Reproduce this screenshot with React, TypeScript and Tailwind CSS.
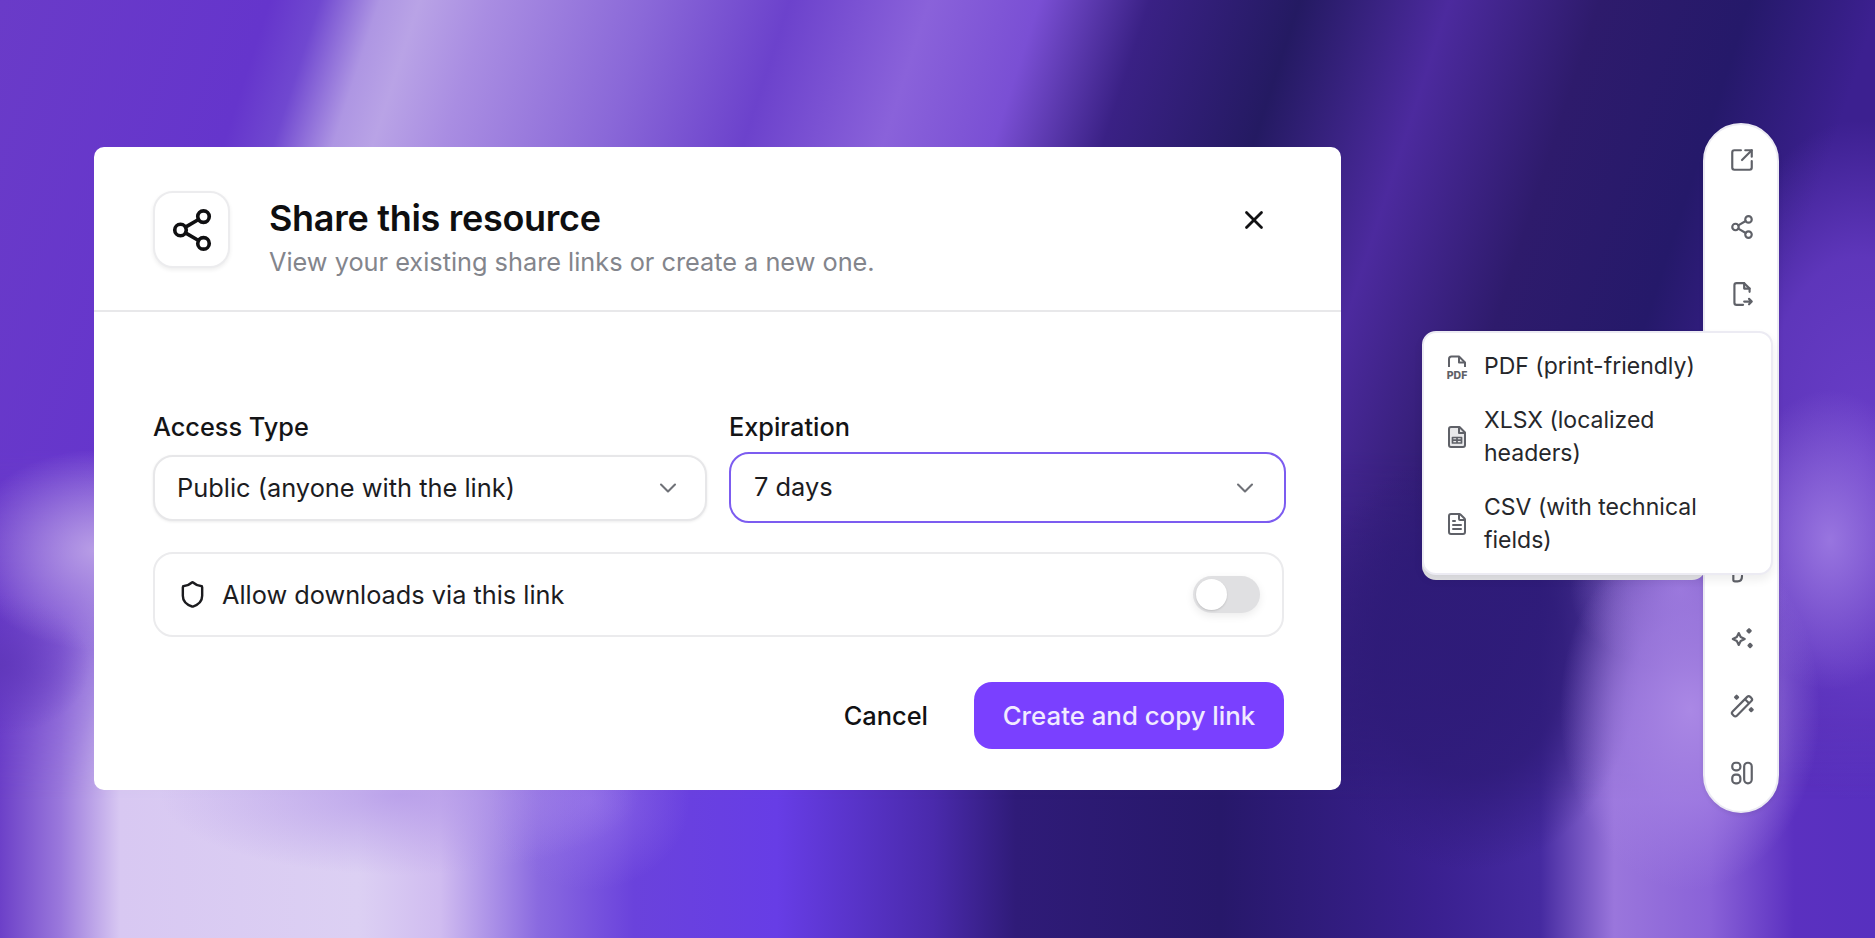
import React from 'react';
import { ChevronDown, FileText, Share2, Shield, SquareArrowOutUpRight, X } from 'lucide-react';

function FileExportIcon() {
  return (
    <svg width="26" height="26" viewBox="0 0 24 24" fill="none" stroke="currentColor" strokeWidth="2" strokeLinecap="round" strokeLinejoin="round">
      <path d="M19 10V7l-5-5H7a2 2 0 0 0-2 2v16a2 2 0 0 0 2 2h6" />
      <path d="M14 2v5h5" />
      <path d="M14 19h7M18.5 16.5 21 19l-2.5 2.5" />
    </svg>
  );
}

function StarsIcon() {
  return (
    <svg width="26" height="26" viewBox="0 0 24 24" fill="none" stroke="currentColor" strokeWidth="2" strokeLinejoin="round">
      <path d="M9 6.500l1.800 3.700 3.700 1.800-3.700 1.800L9 17.500l-1.800-3.700L3.500 12l3.700-1.800z" />
      <path d="M18.500 3l1.500 1.500L18.500 6 17 4.500zM19.500 16.500l1.500 1.500-1.500 1.500-1.500-1.500z" fill="currentColor" />
    </svg>
  );
}

function WandIcon() {
  return (
    <svg width="26" height="26" viewBox="0 0 24 24" fill="none" stroke="currentColor" strokeWidth="2" strokeLinejoin="round">
      <rect x="0.500" y="9.500" width="23" height="5.500" rx="2" transform="rotate(-45 12 12.250)" />
      <path d="M15 6l3.500 3.500" />
      <path d="M7 2.500l1.400 1.400L7 5.300 5.600 3.900zM20.500 14l1.400 1.400-1.400 1.400-1.400-1.400z" fill="currentColor" />
    </svg>
  );
}

function LayoutIcon() {
  return (
    <svg width="26" height="26" viewBox="0 0 24 24" fill="none" stroke="currentColor" strokeWidth="2">
      <rect x="3" y="2.500" width="7.500" height="7" rx="3" />
      <rect x="3" y="13.500" width="7.500" height="8" rx="3" />
      <rect x="14" y="2.500" width="7" height="19" rx="3.500" />
    </svg>
  );
}

function PdfIcon() {
  return (
    <svg width="24" height="26" viewBox="0 0 24 26" fill="none" stroke="currentColor" strokeWidth="2" strokeLinejoin="round">
      <path d="M4 13V5a2.500 2.500 0 0 1 2.500-2.500H14l6 6V13" />
      <path d="M14 2.500v6h6" />
      <text x="12" y="24.500" textAnchor="middle" fontSize="10.500" fontWeight="800" fill="currentColor" stroke="none" fontFamily="Inter, sans-serif">PDF</text>
    </svg>
  );
}

function SheetIcon() {
  return (
    <svg width="24" height="24" viewBox="0 0 24 24" fill="none" stroke="currentColor" strokeWidth="2" strokeLinejoin="round">
      <path d="M14.500 2H6a2 2 0 0 0-2 2v16a2 2 0 0 0 2 2h12a2 2 0 0 0 2-2V7.500z" fill="#e8e8ea" />
      <path d="M14 2v6h6" />
      <path d="M7.500 12.500h9v5.500h-9zM12 12.500V18M7.500 15.200h9" strokeWidth="1.700" />
    </svg>
  );
}

function HiddenToolIcon() {
  return (
    <svg width="26" height="26" viewBox="0 0 24 24" fill="none" stroke="currentColor" strokeWidth="2" strokeLinecap="round">
      <path d="M4 6v14a1.500 1.500 0 0 0 1.500 1.500H8c2.500 0 4-2 4-5" />
    </svg>
  );
}

function SelectBox({ value, focused }: { value: string; focused?: boolean }) {
  return (
    <div
      className={
        focused
          ? '-mt-[3px] flex h-[71px] items-center justify-between rounded-[20px] border-2 border-[#7c5cf0] bg-white pl-[23px] pr-[25px]'
          : 'flex h-[66px] items-center justify-between rounded-[20px] border-2 border-[#e7e7e9] bg-white pl-[22px] pr-[23px] shadow-[0_1px_3px_rgba(0,0,0,0.08)]'
      }
    >
      <span className="text-[25.400px] text-[#1c1c1f]">{value}</span>
      <ChevronDown size={28} strokeWidth={1.8} className="text-[#6f7177]" />
    </div>
  );
}

function Field({ label, children }: { label: string; children: React.ReactNode }) {
  return (
    <div className="flex flex-col">
      <label className="mb-[12px] text-[25.300px] font-medium leading-[32px] text-[#141416]">{label}</label>
      {children}
    </div>
  );
}

function MenuRow({ icon, children }: { icon: React.ReactNode; children: React.ReactNode }) {
  return (
    <div className="flex items-center gap-[15px]">
      <span className="flex w-[24px] shrink-0 justify-center text-[#5f6168]">{icon}</span>
      <span className="text-[23px] leading-[33.500px] text-[#26272b]">{children}</span>
    </div>
  );
}

export default function App() {
  return (
    <div className="relative h-[938px] w-[1875px] overflow-hidden bg-[linear-gradient(90deg,#6c40c8_0px,#9a78dc_60px,#d8c8f2_120px,#dcd0f3_358px,#d0bcf0_440px,#8a6ae0_538px,#6a42dc_634px,#673de6_777px,#4a2aac_933px,#2f1b78_1016px,#27186a_1220px,#3a2090_1435px,#452aa0_1540px,#9a76dc_1614px,#8a62d8_1710px,#5b30c0_1794px,#5730bf_1875px)] font-['Inter',sans-serif] before:absolute before:left-0 before:top-0 before:h-[938px] before:w-[2600px] before:origin-top before:-skew-x-[18deg] before:bg-[linear-gradient(90deg,#6a3bc8_0px,#6535cc_270px,#7048d0_320px,#ae96e3_380px,#b9a3e6_420px,#a98de2_490px,#8a68d8_650px,#6c42cc_790px,#8a62da_930px,#7a4fd4_1040px,#3a2185_1150px,#241a62_1300px,#4c2a9e_1450px,#2e1b6c_1600px,#25196a_1750px,#3c2090_1880px,#3c2090_2600px)] before:[mask-image:linear-gradient(to_bottom,black_450px,transparent_800px)]">
      <div className="relative flex h-full w-full items-start bg-[radial-gradient(ellipse_130px_180px_at_1690px_710px,#aa88e5_0%,rgba(165,130,228,0.7)_50%,transparent_100%),radial-gradient(ellipse_110px_80px_at_1680px_590px,rgba(160,125,225,0.8)_0%,transparent_100%),radial-gradient(ellipse_100px_150px_at_1830px_540px,rgba(155,120,225,0.95)_0%,transparent_100%),radial-gradient(ellipse_170px_340px_at_1860px_460px,rgba(108,63,204,0.95)_0%,rgba(108,63,204,0.7)_60%,transparent_100%),radial-gradient(ellipse_170px_210px_at_1470px_660px,rgba(46,27,120,0.95)_0%,rgba(46,27,120,0.8)_55%,transparent_100%),radial-gradient(ellipse_240px_80px_at_400px_795px,rgba(178,150,232,0.75)_0%,transparent_100%),radial-gradient(ellipse_100px_90px_at_590px_800px,rgba(150,115,235,0.7)_0%,transparent_100%),radial-gradient(ellipse_130px_100px_at_95px_550px,rgba(190,165,232,0.9)_0%,transparent_100%),radial-gradient(ellipse_90px_70px_at_0px_665px,rgba(95,55,185,0.85)_0%,transparent_100%)] pl-[94px] pt-[147px]">
        {/* dialog */}
        <div className="w-[1247px] shrink-0 rounded-[10px] bg-white">
          <header className="flex h-[165px] items-start border-b-2 border-[#e8e8ea] pl-[59px] pr-[72px] pt-[44px]">
            <div className="flex h-[77px] w-[77px] items-center justify-center rounded-[20px] border-2 border-[#ececee] bg-white shadow-[0_2px_4px_rgba(0,0,0,0.07)]">
              <Share2 size={46} strokeWidth={1.9} className="text-[#0f0f11]" />
            </div>
            <div className="ml-[39px] flex-1">
              <h1 className="mt-[4px] text-[36px] font-semibold leading-[46px] tracking-[-0.3px] text-[#0e0e10]">Share this resource</h1>
              <p className="mt-[5px] text-[25.300px] leading-[32px] text-[#83858c]">View your existing share links or create a new one.</p>
            </div>
            <X size={30} strokeWidth={2.2} className="mt-[14px] text-[#111113]" />
          </header>

          <div className="px-[59px] pb-[41px] pt-[99px]">
            <div className="grid grid-cols-[554px_557px] gap-x-[22px]">
              <Field label="Access Type">
                <SelectBox value="Public (anyone with the link)" />
              </Field>
              <Field label="Expiration">
                <SelectBox value="7 days" focused />
              </Field>
            </div>

            <div className="mt-[29px] flex h-[85px] w-[1131px] items-center rounded-[20px] border-2 border-[#ebebed] pl-[23px] pr-[22px]">
              <Shield size={29} strokeWidth={2} className="text-[#1b1b1e]" />
              <span className="ml-[15px] flex-1 text-[25.300px] text-[#1c1c1f]">Allow downloads via this link</span>
              <div className="flex h-[37px] w-[67px] items-center rounded-full bg-[#e0e0e2] pl-[3px] shadow-[0_3px_8px_rgba(0,0,0,0.08)]">
                <div className="h-[31px] w-[31px] rounded-full bg-white shadow-[0_1px_2px_rgba(0,0,0,0.15)]" />
              </div>
            </div>

            <div className="mt-[45px] flex w-[1131px] items-center justify-end">
              <button className="mr-[46px] mt-[2px] text-[25.400px] font-medium text-[#111113]">Cancel</button>
              <button className="flex h-[67px] w-[310px] items-center justify-center rounded-[18px] bg-[#7a40ff] pt-[1px] text-[25.800px] font-medium text-[#f1ebff]">
                Create and copy link
              </button>
            </div>
          </div>
        </div>

        {/* vertical toolbar */}
        <div className="relative ml-[362px] mt-[-24px] flex h-[690px] w-[76px] shrink-0 flex-col items-center gap-[41px] rounded-[38px] border-2 border-[#ecebf3] bg-white pl-[2px] pt-[22px] text-[#5f6168] shadow-[0_2px_4px_rgba(0,0,0,0.08)]">
          <SquareArrowOutUpRight size={26} strokeWidth={2} />
          <Share2 size={26} strokeWidth={2} />
          <FileExportIcon />
          <span className="h-[26px] w-[26px]" />
          <span className="h-[26px] w-[26px]" />
          <span className="h-[26px] w-[26px]" />
          <span className="mt-[9px]">
            <HiddenToolIcon />
          </span>
          <span className="mt-[1px]">
            <StarsIcon />
          </span>
          <WandIcon />
          <LayoutIcon />

          {/* grey lip under the menu, stops at the toolbar edge */}
          <div className="absolute left-[-283px] top-[430px] h-[25px] w-[284px] rounded-b-[14px] bg-[#e3e3e6]" />

          {/* export menu */}
          <div className="absolute left-[-283px] top-[206px] flex h-[244px] w-[351px] flex-col gap-[20px] rounded-[14px] border-2 border-[#ecebf3] bg-white pl-[21px] pr-[24px] pt-[17px] shadow-[0_5px_10px_rgba(0,0,0,0.07)]">
            <MenuRow icon={<PdfIcon />}>PDF (print-friendly)</MenuRow>
            <MenuRow icon={<SheetIcon />}>XLSX (localized headers)</MenuRow>
            <MenuRow icon={<FileText size={24} strokeWidth={2} />}>CSV (with technical fields)</MenuRow>
          </div>
        </div>
      </div>
    </div>
  );
}
